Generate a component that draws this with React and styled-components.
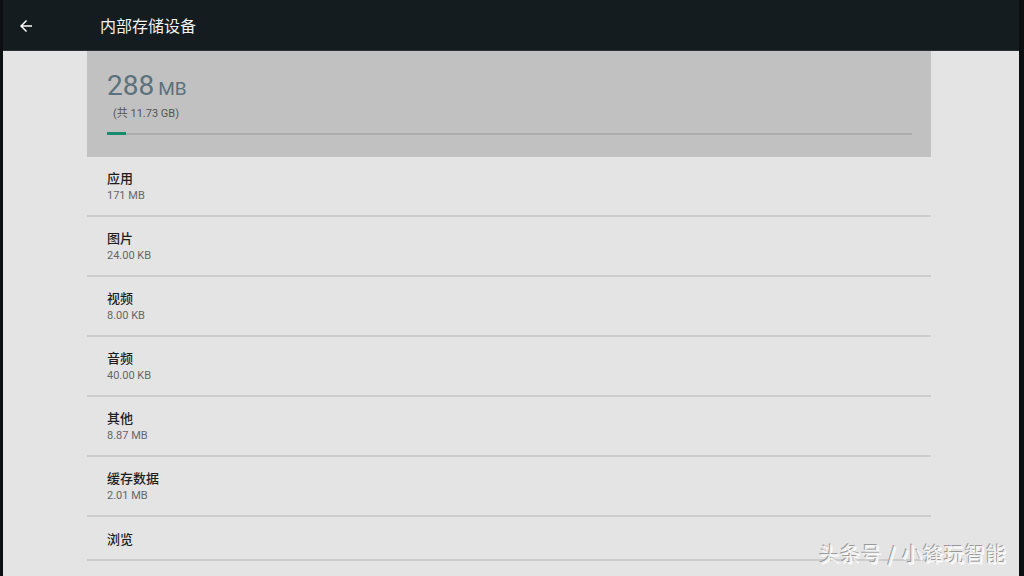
import styled, { createGlobalStyle } from "styled-components"

const GlobalStyle = createGlobalStyle`
  html, body {
    margin: 0;
    padding: 0;
    background: #e4e4e4;
  }
  body {
    font-family: Roboto, "Noto Sans CJK SC", sans-serif;
  }
`

const items = [
  { title: "应用", size: "171 MB" },
  { title: "图片", size: "24.00 KB" },
  { title: "视频", size: "8.00 KB" },
  { title: "音频", size: "40.00 KB" },
  { title: "其他", size: "8.87 MB" },
  { title: "缓存数据", size: "2.01 MB" },
  { title: "浏览" },
]

const BackArrow = () => (
  <svg width="18" height="18" viewBox="0 0 24 24" fill="#fff">
    <path d="M20 11H7.83l5.59-5.59L12 4l-8 8 8 8 1.41-1.41L7.83 13H20v-2z" />
  </svg>
)

const App = () => {
  const used = 288
  const total = 11.73 * 1024
  return (
    <>
      <GlobalStyle />
      <Frame>
        <TopBar>
          <BackButton><BackArrow /></BackButton>
          <Title>内部存储设备</Title>
        </TopBar>
        <Column>
          <Summary>
            <Usage>
              <span className="num">288</span>
              <span className="unit">MB</span>
            </Usage>
            <Total>(共 11.73 GB)</Total>
            <Track>
              <Fill style={{ width: `${Math.max((used / total) * 100, 1.9)}%` }} />
            </Track>
          </Summary>
          {items.map((item) => (
            <Row key={item.title} $single={!item.size}>
              <RowTitle>{item.title}</RowTitle>
              {item.size && <RowSub>{item.size}</RowSub>}
            </Row>
          ))}
        </Column>
        <Watermark>头条号 / 小锋玩智能</Watermark>
      </Frame>
    </>
  )
}

export default App

const Frame = styled.div`
  position: relative;
  height: 576px;
  overflow: hidden;
  border-left: 3px solid #0b0f10;
  border-right: 5px solid #0b0f10;
  box-sizing: border-box;
  background: #e4e4e4;
`

const TopBar = styled.header`
  height: 51px;
  background: #141c1f;
  border-bottom: 1px solid #2a3436;
  box-sizing: border-box;
  display: flex;
  align-items: center;
`

const BackButton = styled.div`
  width: 46px;
  display: flex;
  justify-content: center;
  margin-top: 1px;
`

const Title = styled.h1`
  margin: 0 0 0 51px;
  font-size: 16px;
  font-weight: 400;
  color: #f2f2f2;
  font-family: "Noto Sans CJK SC", sans-serif;
`

const Column = styled.main`
  width: 844px;
  margin-left: 84px;
`

const Summary = styled.section`
  background: #c1c1c1;
  height: 106px;
  padding: 21px 20px 0 20px;
  box-sizing: border-box;
`

const Usage = styled.div`
  color: #5b717b;
  line-height: 1;
  .num {
    font-size: 28px;
  }
  .unit {
    font-size: 19px;
    margin-left: 4px;
  }
`

const Total = styled.div`
  margin-top: 4px;
  margin-left: 6px;
  font-size: 11px;
  color: #555;
  font-family: Roboto, "Noto Sans CJK SC", sans-serif;
`

const Track = styled.div`
  margin-top: 12px;
  height: 3px;
  width: 805px;
  background: linear-gradient(#c1c1c1 0 1px, #acacac 1px 3px);
`

const Fill = styled.div`
  height: 3px;
  background: #198c6e;
`

const Row = styled.div`
  height: ${(p) => (p.$single ? "44px" : "60px")};
  padding-left: 20px;
  border-bottom: 2px solid #cdcdcd;
  box-sizing: border-box;
  display: flex;
  flex-direction: column;
  justify-content: center;
`

const RowTitle = styled.div`
  font-size: 13px;
  font-weight: 500;
  color: #1e1e1e;
  font-family: "Noto Sans CJK SC", sans-serif;
  line-height: 17px;
`

const RowSub = styled.div`
  margin-top: 3px;
  font-size: 11px;
  color: #666;
  line-height: 14px;
`

const Watermark = styled.div`
  position: absolute;
  right: 12px;
  bottom: 8px;
  font-size: 20px;
  color: #f0f0f0;
  font-family: "Noto Sans CJK SC", sans-serif;
  text-shadow: -1px -1px 0 #9a9a9a, 1px 1px 0 #ffffff;
  letter-spacing: 1px;
`
